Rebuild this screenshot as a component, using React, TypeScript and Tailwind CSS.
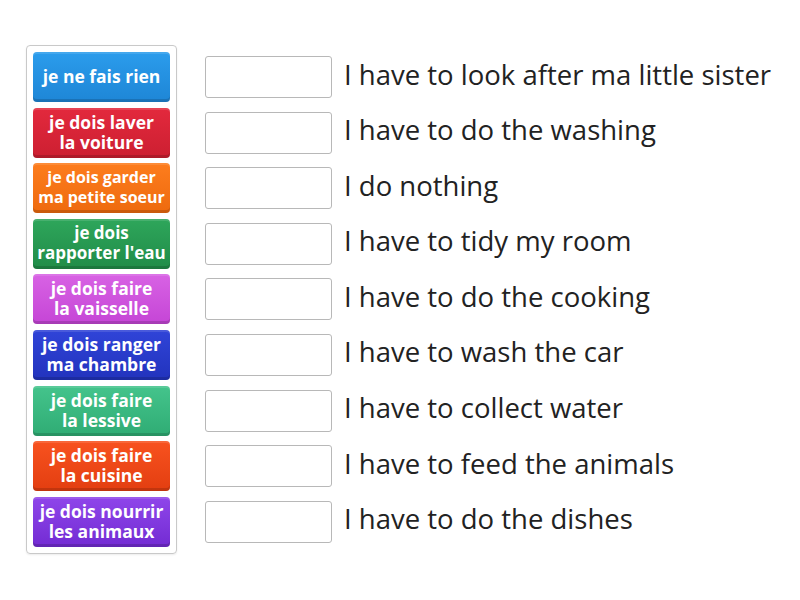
import React from 'react'

interface Tile {
  label: string[]
  top: string
  bottom: string
  size: string
}

const tiles: Tile[] = [
  { label: ['je ne fais rien'], top: 'from-[#2b9cec]', bottom: 'to-[#1e86d6]', size: 'text-[17.5px]' },
  { label: ['je dois laver', 'la voiture'], top: 'from-[#e3293d]', bottom: 'to-[#cc1f31]', size: 'text-[17.5px]' },
  { label: ['je dois garder', 'ma petite soeur'], top: 'from-[#fd7d1d]', bottom: 'to-[#ee6a0e]', size: 'text-[16px]' },
  { label: ['je dois', "rapporter l'eau"], top: 'from-[#2ea65b]', bottom: 'to-[#208c48]', size: 'text-[17px]' },
  { label: ['je dois faire', 'la vaisselle'], top: 'from-[#d862e4]', bottom: 'to-[#c545d6]', size: 'text-[17.5px]' },
  { label: ['je dois ranger', 'ma chambre'], top: 'from-[#3044d8]', bottom: 'to-[#2233bd]', size: 'text-[17.5px]' },
  { label: ['je dois faire', 'la lessive'], top: 'from-[#44c48c]', bottom: 'to-[#2fac74]', size: 'text-[17.5px]' },
  { label: ['je dois faire', 'la cuisine'], top: 'from-[#f8521f]', bottom: 'to-[#e33e10]', size: 'text-[17.5px]' },
  { label: ['je dois nourrir', 'les animaux'], top: 'from-[#8f45ea]', bottom: 'to-[#732bd3]', size: 'text-[17.5px]' },
]

const prompts = [
  'I have to look after ma little sister',
  'I have to do the washing',
  'I do nothing',
  'I have to tidy my room',
  'I have to do the cooking',
  'I have to wash the car',
  'I have to collect water',
  'I have to feed the animals',
  'I have to do the dishes',
]

export default function App() {
  return (
    <div className="w-[800px] h-[600px] bg-white font-['Open_Sans',sans-serif] flex items-start pt-[45px] pl-[26px]">
      {/* draggable answer tiles */}
      <div className="flex flex-col gap-[5.6px] p-[6px] border border-[#c9c9c9] rounded-[4px] shadow-[0_1px_2px_rgba(0,0,0,0.08)]">
        {tiles.map((t, i) => (
          <div
            key={i}
            className={`w-[137px] h-[50px] rounded-[4px] bg-gradient-to-b ${t.top} ${t.bottom} shadow-[inset_0_-3px_0_rgba(0,0,0,0.15),inset_0_2px_0_rgba(255,255,255,0.12)] flex flex-col items-center justify-center pb-[2px] text-white font-bold leading-[20px] ${t.size} text-center`}
          >
            {t.label.map((l, j) => (
              <span key={j} className="whitespace-nowrap">{l}</span>
            ))}
          </div>
        ))}
      </div>

      {/* drop targets */}
      <div className="flex flex-col gap-[5.6px] pt-[7px] ml-[28px]">
        {prompts.map((p, i) => (
          <div key={i} className="h-[50px] flex items-center">
            <div className="w-[127px] h-[42px] border border-[#b8b8b8] rounded-[3px] bg-white" />
            <span className="ml-[12px] pb-[5px] text-[27.5px] leading-[32px] text-[#222] whitespace-nowrap">{p}</span>
          </div>
        ))}
      </div>
    </div>
  )
}
